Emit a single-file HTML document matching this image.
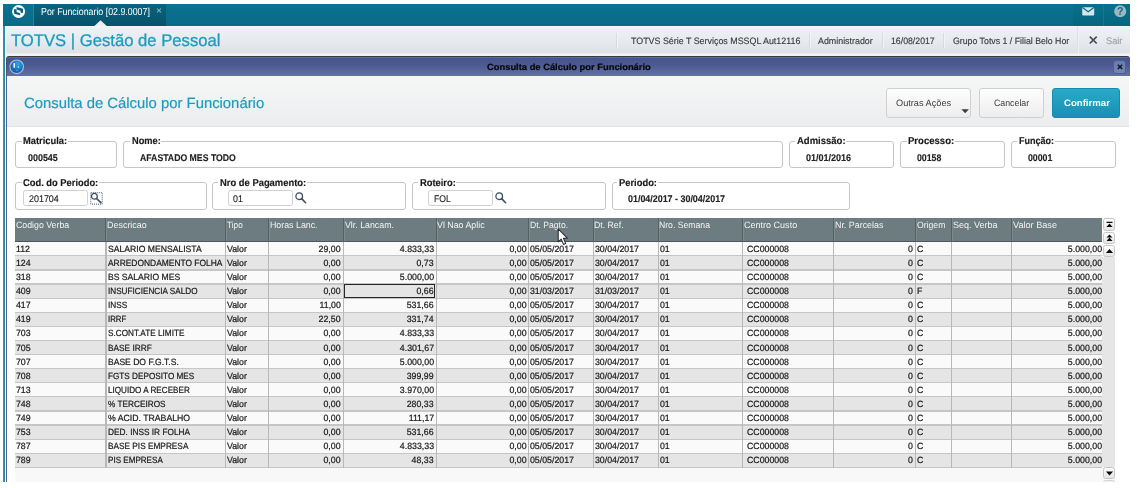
<!DOCTYPE html>
<html lang="pt-BR"><head><meta charset="utf-8"><title>TOTVS | Gestão de Pessoal</title>
<style>

html,body{margin:0;padding:0;background:#fff;}
body{width:1138px;height:488px;overflow:hidden;position:relative;
  font-family:"Liberation Sans",sans-serif;font-size:9px;color:#222;}
#app{position:absolute;left:0;top:0;width:1138px;height:488px;overflow:hidden;background:#fff;filter:blur(0.3px);}
#app div{position:absolute;box-sizing:border-box;}
.t{white-space:pre;line-height:20px;transform:rotate(0.03deg);}
.fs{border:1px solid #c6c6c6;border-radius:3px;background:#fff;}
.in{border:1px solid #cdd1d5;border-radius:2.5px;background:#fff;}

</style></head><body><div id="app">
<div style="left:3px;top:4px;width:1127px;height:21.8px;background:linear-gradient(#0b7390,#086a86);"></div>
<div style="left:33.4px;top:4px;width:133px;height:21.8px;background:linear-gradient(#09647e,#05536a);border-left:1px solid #27809a;"></div>
<svg style="position:absolute;left:10px;top:4px" width="18" height="16" viewBox="0 0 18 16"><circle cx="8.6" cy="7.5" r="6.5" fill="#fff"/><path d="M6.5 3.0 L13.0 4.8 L12.85 9.1 L10.7 8.8 L10.55 6.7 L6.7 5.4 Z" fill="#075f79"/><path d="M4.0 5.2 L6.6 5.2 L6.6 7.95 L10.1 9.15 L10.1 11.3 L4.2 9.75 Z" fill="#075f79"/></svg>
<div class="t" style="font-size:10.2px;top:2px;color:#fff;left:40.6px;transform-origin:0 0;transform:scaleX(0.8659) rotate(0.03deg);">Por Funcionario [02.9.0007]</div>
<svg style="position:absolute;left:155.6px;top:8.4px" width="6" height="5" viewBox="0 0 6 5"><path d="M0.8 0.4 L5.2 4.6 M5.2 0.4 L0.8 4.6" stroke="#b4cfd8" stroke-width="0.9" fill="none"/></svg>
<svg style="position:absolute;left:94px;top:20px" width="14" height="6" viewBox="0 0 14 6"><path d="M0.4 6 L6.5 0.2 L12.8 6 Z" fill="#eceef0"/></svg>
<div style="left:1073.4px;top:4px;width:56.6px;height:21.8px;background:linear-gradient(#08708c,#06657f);"></div>
<div style="left:1103px;top:4px;width:1px;height:21.8px;background:#2a6f84;"></div>
<svg style="position:absolute;left:1082px;top:6.8px" width="13" height="9" viewBox="0 0 13 9"><rect x="0.2" y="0.2" width="12" height="8.3" rx="0.9" fill="#d6e5ea"/><path d="M0.5 0.6 L6.2 4.8 L11.9 0.6" fill="none" stroke="#0a6d89" stroke-width="1.2"/></svg>
<svg style="position:absolute;left:1113.5px;top:5.1px" width="13" height="13" viewBox="0 0 13 13"><circle cx="6.2" cy="6.2" r="6" fill="#9fb6c0"/><text x="6.2" y="10" text-anchor="middle" font-family="Liberation Sans" font-weight="bold" font-size="10.5" fill="#0a6d89">?</text></svg>
<div style="left:6px;top:25.8px;width:1124px;height:26.8px;background:linear-gradient(#f7f8f9 0%,#eef1f4 8%,#e7eaee 55%,#dde1e5 100%);"></div>
<div style="left:6px;top:52.6px;width:1124px;height:3.6px;background:linear-gradient(#e6e8ea,#f0f1f2 40%,#f4f4f5);"></div>
<div style="left:3px;top:25.8px;width:1.6px;height:456.2px;background:linear-gradient(90deg,#3a9db3,#23849b);"></div>
<div class="t" style="font-size:16.9px;top:31px;color:#1c9cbe;left:11.2px;transform-origin:0 0;transform:scaleX(0.9858) rotate(0.03deg);-webkit-text-stroke:0.3px #1c9cbe;">TOTVS | Gestão de Pessoal</div>
<div style="left:616px;top:32.6px;width:1px;height:15px;background:#d8dbde;"></div>
<div style="left:617px;top:32.6px;width:1px;height:15px;background:#f3f4f5;"></div>
<div style="left:809.2px;top:32.6px;width:1px;height:15px;background:#d8dbde;"></div>
<div style="left:810.2px;top:32.6px;width:1px;height:15px;background:#f3f4f5;"></div>
<div style="left:881.6px;top:32.6px;width:1px;height:15px;background:#d8dbde;"></div>
<div style="left:882.6px;top:32.6px;width:1px;height:15px;background:#f3f4f5;"></div>
<div style="left:943.2px;top:32.6px;width:1px;height:15px;background:#d8dbde;"></div>
<div style="left:944.2px;top:32.6px;width:1px;height:15px;background:#f3f4f5;"></div>
<div style="left:1077.4px;top:27px;width:1px;height:25.6px;background:#dfe2e5;"></div>
<div style="left:1078.4px;top:27px;width:1px;height:25.6px;background:#eef0f2;"></div>
<div class="t" style="font-size:9.2px;top:31px;color:#3c3c3c;left:630.6px;transform-origin:0 0;transform:scaleX(0.9670) rotate(0.03deg);-webkit-text-stroke:0.15px #3c3c3c;">TOTVS Série T Serviços MSSQL Aut12116</div>
<div class="t" style="font-size:9.2px;top:31px;color:#3c3c3c;left:818.4px;transform-origin:0 0;transform:scaleX(0.9656) rotate(0.03deg);-webkit-text-stroke:0.15px #3c3c3c;">Administrador</div>
<div class="t" style="font-size:9.2px;top:31px;color:#3c3c3c;left:890.6px;transform-origin:0 0;transform:scaleX(0.9512) rotate(0.03deg);-webkit-text-stroke:0.15px #3c3c3c;">16/08/2017</div>
<div class="t" style="font-size:9.2px;top:31px;color:#3c3c3c;left:952.8px;transform-origin:0 0;transform:scaleX(0.9538) rotate(0.03deg);-webkit-text-stroke:0.15px #3c3c3c;">Grupo Totvs 1 / Filial Belo Hor</div>
<svg style="position:absolute;left:1089.4px;top:36.2px" width="9" height="9" viewBox="0 0 9 9"><path d="M0.8 0.7 L7.7 7.5 M7.7 0.7 L0.8 7.5" stroke="#474c56" stroke-width="1.7" fill="none"/></svg>
<div class="t" style="font-size:9.6px;top:31px;color:#a0a2a8;left:1105.8px;transform-origin:0 0;transform:scaleX(0.9606) rotate(0.03deg);-webkit-text-stroke:0.15px #a0a2a8;">Sair</div>
<div style="left:6px;top:56.1px;width:1124.1px;height:20.4px;background:linear-gradient(#6473a8 0%,#46558d 8%,#4a5990 40%,#5a699e 80%,#6372a6 100%);border-top:1px solid #3a3a40;border-left:1px solid #4d5166;border-radius:3px 3px 0 0;"></div>
<div class="t" style="font-size:9px;top:57px;font-weight:bold;color:#05060b;left:486.8px;transform-origin:0 0;transform:scaleX(1.0399) rotate(0.03deg);-webkit-text-stroke:0.2px #05060b;">Consulta de Cálculo por Funcionário</div>
<svg style="position:absolute;left:9px;top:59px" width="16" height="16" viewBox="0 0 16 16"><defs><radialGradient id="g1" cx="58%" cy="30%" r="75%"><stop offset="0" stop-color="#2fa6e2"/><stop offset="0.55" stop-color="#1279c8"/><stop offset="1" stop-color="#0a4c9c"/></radialGradient></defs><circle cx="7.7" cy="7.8" r="6.8" fill="url(#g1)" stroke="#b4b9c8" stroke-width="1.1"/><rect x="4.5" y="4.2" width="1.5" height="4.5" fill="#f4f9fe"/><path d="M8.3 8.6 L9.3 7.1 L10.6 8.6 Z" fill="#e3f0fb"/><rect x="7.3" y="11.3" width="1.1" height="0.8" fill="#8cc4ee"/></svg>
<div style="left:1112.6px;top:60.1px;width:13.8px;height:14px;background:linear-gradient(#6b79ad,#7583b5);border:1px solid #4f5d95;border-radius:3px;"></div>
<svg style="position:absolute;left:1116.6px;top:64.3px" width="6" height="6" viewBox="0 0 6 6"><path d="M0.8 0.8 L5.2 4.9 M5.2 0.8 L0.8 4.9" stroke="#14172a" stroke-width="1.5" fill="none"/></svg>
<div style="left:6px;top:76.2px;width:1.2px;height:405.8px;background:#4f5f98;"></div>
<div style="left:7.2px;top:76.2px;width:1122px;height:50.4px;background:linear-gradient(#f5f6f6,#ecedee);border-bottom:1px solid #e1e2e3;"></div>
<div class="t" style="font-size:14.8px;top:93px;color:#1c9cbe;left:24.4px;transform-origin:0 0;transform:scaleX(1.0033) rotate(0.03deg);-webkit-text-stroke:0.2px #1c9cbe;">Consulta de Cálculo por Funcionário</div>
<div style="left:886px;top:88.2px;width:85.4px;height:29.6px;background:linear-gradient(#fefefe,#ededed);border:1px solid #d0d0d0;border-radius:3px;"></div>
<div class="t" style="font-size:9.2px;top:93px;color:#3a3a3a;left:896px;transform-origin:0 0;">Outras Ações</div>
<svg style="position:absolute;left:961px;top:108.8px" width="9" height="5" viewBox="0 0 9 5"><path d="M0.4 0.3 L7.9 0.3 L4.15 4.3 Z" fill="#3a3a3a"/></svg>
<div style="left:979.3px;top:88.2px;width:65px;height:29.6px;background:linear-gradient(#fefefe,#ededed);border:1px solid #d0d0d0;border-radius:3px;"></div>
<div class="t" style="font-size:9.2px;top:93px;color:#3a3a3a;left:994.2px;transform-origin:0 0;transform:scaleX(0.9560) rotate(0.03deg);">Cancelar</div>
<div style="left:1052.2px;top:88.2px;width:68.2px;height:29.5px;background:linear-gradient(#2ba9c9,#1790b3);border:1px solid #178bab;border-radius:3px;"></div>
<div class="t" style="font-size:9.4px;top:93px;font-weight:bold;color:#fff;left:1063.7px;transform-origin:0 0;transform:scaleX(1.0241) rotate(0.03deg);">Confirmar</div>
<div class="fs" style="left:15px;top:141.4px;width:101.8px;height:26.4px;"></div>
<div style="left:21.6px;top:140.4px;width:46.8px;height:3px;background:#fff;"></div>
<div class="t" style="font-size:10px;top:131px;font-weight:bold;color:#1a1a1a;left:23.2px;transform-origin:0 0;transform:scaleX(0.9358) rotate(0.03deg);-webkit-text-stroke:0.15px #1a1a1a;">Matricula:</div>
<div class="t" style="font-size:9.7px;top:148px;font-weight:bold;left:28px;transform-origin:0 0;transform:scaleX(0.9207) rotate(0.03deg);-webkit-text-stroke:0.12px #222;">000545</div>
<div class="fs" style="left:123px;top:141.4px;width:659.6px;height:26.4px;"></div>
<div style="left:130px;top:140.4px;width:31.4px;height:3px;background:#fff;"></div>
<div class="t" style="font-size:10px;top:131px;font-weight:bold;color:#1a1a1a;left:131.6px;transform-origin:0 0;transform:scaleX(0.9256) rotate(0.03deg);-webkit-text-stroke:0.15px #1a1a1a;">Nome:</div>
<div class="t" style="font-size:9.7px;top:148px;font-weight:bold;left:139.6px;transform-origin:0 0;transform:scaleX(0.8982) rotate(0.03deg);-webkit-text-stroke:0.12px #222;">AFASTADO MES TODO</div>
<div class="fs" style="left:788.6px;top:141.4px;width:105.2px;height:26.4px;"></div>
<div style="left:795.2px;top:140.4px;width:51.2px;height:3px;background:#fff;"></div>
<div class="t" style="font-size:10px;top:131px;font-weight:bold;color:#1a1a1a;left:796.8px;transform-origin:0 0;transform:scaleX(0.9506) rotate(0.03deg);-webkit-text-stroke:0.15px #1a1a1a;">Admissão:</div>
<div class="t" style="font-size:9.7px;top:148px;font-weight:bold;left:806px;transform-origin:0 0;transform:scaleX(0.9310) rotate(0.03deg);-webkit-text-stroke:0.12px #222;">01/01/2016</div>
<div class="fs" style="left:899.9px;top:141.4px;width:104.7px;height:26.4px;"></div>
<div style="left:906.6px;top:140.4px;width:48.8px;height:3px;background:#fff;"></div>
<div class="t" style="font-size:10px;top:131px;font-weight:bold;color:#1a1a1a;left:908.2px;transform-origin:0 0;transform:scaleX(0.9554) rotate(0.03deg);-webkit-text-stroke:0.15px #1a1a1a;">Processo:</div>
<div class="t" style="font-size:9.7px;top:148px;font-weight:bold;left:917px;transform-origin:0 0;transform:scaleX(0.9046) rotate(0.03deg);-webkit-text-stroke:0.12px #222;">00158</div>
<div class="fs" style="left:1011.1px;top:141.4px;width:105px;height:26.4px;"></div>
<div style="left:1017.3px;top:140.4px;width:37.6px;height:3px;background:#fff;"></div>
<div class="t" style="font-size:10px;top:131px;font-weight:bold;color:#1a1a1a;left:1018.9px;transform-origin:0 0;transform:scaleX(0.9000) rotate(0.03deg);-webkit-text-stroke:0.15px #1a1a1a;">Função:</div>
<div class="t" style="font-size:9.7px;top:148px;font-weight:bold;left:1027.9px;transform-origin:0 0;transform:scaleX(0.9046) rotate(0.03deg);-webkit-text-stroke:0.12px #222;">00001</div>
<div class="fs" style="left:15px;top:182.2px;width:191.7px;height:27.6px;"></div>
<div style="left:21.6px;top:181.2px;width:77.8px;height:3px;background:#fff;"></div>
<div class="t" style="font-size:10px;top:173px;font-weight:bold;color:#1a1a1a;left:23.2px;transform-origin:0 0;transform:scaleX(0.9336) rotate(0.03deg);-webkit-text-stroke:0.15px #1a1a1a;">Cod. do Periodo:</div>
<div class="in" style="left:23.2px;top:190px;width:64.8px;height:15.9px;"></div>
<div class="t" style="font-size:9.7px;top:189px;left:28.7px;transform-origin:0 0;transform:scaleX(0.9207) rotate(0.03deg);-webkit-text-stroke:0.12px #222;">201704</div>
<div class="fs" style="left:211.5px;top:182.2px;width:194.5px;height:27.6px;"></div>
<div style="left:218px;top:181.2px;width:88.8px;height:3px;background:#fff;"></div>
<div class="t" style="font-size:10px;top:173px;font-weight:bold;color:#1a1a1a;left:219.6px;transform-origin:0 0;transform:scaleX(0.9402) rotate(0.03deg);-webkit-text-stroke:0.15px #1a1a1a;">Nro de Pagamento:</div>
<div class="in" style="left:228.2px;top:190px;width:64.4px;height:15.9px;"></div>
<div class="t" style="font-size:9.7px;top:189px;left:232.8px;transform-origin:0 0;transform:scaleX(0.9083) rotate(0.03deg);-webkit-text-stroke:0.12px #222;">01</div>
<div class="fs" style="left:411.9px;top:182.2px;width:194.1px;height:27.6px;"></div>
<div style="left:418.1px;top:181.2px;width:38.4px;height:3px;background:#fff;"></div>
<div class="t" style="font-size:10px;top:173px;font-weight:bold;color:#1a1a1a;left:419.7px;transform-origin:0 0;transform:scaleX(0.9340) rotate(0.03deg);-webkit-text-stroke:0.15px #1a1a1a;">Roteiro:</div>
<div class="in" style="left:428.2px;top:190px;width:64.4px;height:15.9px;"></div>
<div class="t" style="font-size:9.7px;top:189px;left:433.6px;transform-origin:0 0;transform:scaleX(0.8905) rotate(0.03deg);-webkit-text-stroke:0.12px #222;">FOL</div>
<div class="fs" style="left:611.5px;top:182.2px;width:238.4px;height:27.6px;"></div>
<div style="left:617.4px;top:181.2px;width:40.6px;height:3px;background:#fff;"></div>
<div class="t" style="font-size:10px;top:173px;font-weight:bold;color:#1a1a1a;left:619px;transform-origin:0 0;transform:scaleX(0.9370) rotate(0.03deg);-webkit-text-stroke:0.15px #1a1a1a;">Periodo:</div>
<div class="t" style="font-size:9.7px;top:189px;font-weight:bold;left:628px;transform-origin:0 0;transform:scaleX(0.9195) rotate(0.03deg);-webkit-text-stroke:0.12px #222;">01/04/2017 - 30/04/2017</div>
<svg style="position:absolute;left:90px;top:191.6px" width="13" height="13" viewBox="0 0 13 13"><rect x="0.8" y="0.7" width="11.4" height="11.4" fill="none" stroke="#39465a" stroke-width="0.9" stroke-dasharray="1 1"/><circle cx="4.4" cy="4.3" r="2.9" fill="#fff" stroke="#3d4e64" stroke-width="1.3"/><path d="M6.6 6.5 L11.4 11.2" stroke="#3d4e64" stroke-width="1.7"/></svg>
<svg style="position:absolute;left:295px;top:191.6px" width="12" height="12" viewBox="0 0 12 12"><circle cx="4.2" cy="4.2" r="3.3" fill="none" stroke="#3c4c60" stroke-width="1.3"/><path d="M6.6 6.6 L10.6 10.7" stroke="#3c4c60" stroke-width="1.6" stroke-linecap="round"/></svg>
<svg style="position:absolute;left:495px;top:191.6px" width="12" height="12" viewBox="0 0 12 12"><circle cx="4.2" cy="4.2" r="3.3" fill="none" stroke="#3c4c60" stroke-width="1.3"/><path d="M6.6 6.6 L10.6 10.7" stroke="#3c4c60" stroke-width="1.6" stroke-linecap="round"/></svg>
<div style="left:15.4px;top:218px;width:1099.8px;height:264px;background:#f8f8f8;"></div>
<div style="left:1102.3px;top:218px;width:12.9px;height:40px;background:#fff;"></div>
<div style="left:1102.3px;top:257.2px;width:13.1px;height:209.4px;background:#e6e6e6;"></div>
<div style="left:15.4px;top:218px;width:1086.9px;height:23.7px;background:#6c7c81;border-bottom:1px solid #4e585c;"></div>
<div class="t" style="font-size:9.1px;top:215px;color:#f2f5f5;left:16.4px;transform-origin:0 0;transform:scaleX(0.9647) rotate(0.03deg);">Codigo Verba</div>
<div style="left:105.2px;top:218px;width:1.1px;height:23.7px;background:#566166;"></div>
<div style="left:106.3px;top:218px;width:0.8px;height:22.7px;background:#7b8a8f;"></div>
<div class="t" style="font-size:9.1px;top:215px;color:#f2f5f5;left:107.4px;transform-origin:0 0;transform:scaleX(0.9838) rotate(0.03deg);">Descricao</div>
<div style="left:225px;top:218px;width:1.1px;height:23.7px;background:#566166;"></div>
<div style="left:226.1px;top:218px;width:0.8px;height:22.7px;background:#7b8a8f;"></div>
<div class="t" style="font-size:9.1px;top:215px;color:#f2f5f5;left:227px;transform-origin:0 0;transform:scaleX(0.9099) rotate(0.03deg);">Tipo</div>
<div style="left:268px;top:218px;width:1.1px;height:23.7px;background:#566166;"></div>
<div style="left:269.1px;top:218px;width:0.8px;height:22.7px;background:#7b8a8f;"></div>
<div class="t" style="font-size:9.1px;top:215px;color:#f2f5f5;left:269.8px;transform-origin:0 0;transform:scaleX(0.9702) rotate(0.03deg);">Horas Lanc.</div>
<div style="left:343.1px;top:218px;width:1.1px;height:23.7px;background:#566166;"></div>
<div style="left:344.2px;top:218px;width:0.8px;height:22.7px;background:#7b8a8f;"></div>
<div class="t" style="font-size:9.1px;top:215px;color:#f2f5f5;left:344.5px;transform-origin:0 0;transform:scaleX(0.9688) rotate(0.03deg);">Vlr. Lancam.</div>
<div style="left:435.5px;top:218px;width:1.1px;height:23.7px;background:#566166;"></div>
<div style="left:436.6px;top:218px;width:0.8px;height:22.7px;background:#7b8a8f;"></div>
<div class="t" style="font-size:9.1px;top:215px;color:#f2f5f5;left:436.8px;transform-origin:0 0;transform:scaleX(0.9702) rotate(0.03deg);">Vl Nao Aplic</div>
<div style="left:528px;top:218px;width:1.1px;height:23.7px;background:#566166;"></div>
<div style="left:529.1px;top:218px;width:0.8px;height:22.7px;background:#7b8a8f;"></div>
<div class="t" style="font-size:9.1px;top:215px;color:#f2f5f5;left:530.2px;transform-origin:0 0;transform:scaleX(0.9440) rotate(0.03deg);">Dt. Pagto.</div>
<div style="left:592.8px;top:218px;width:1.1px;height:23.7px;background:#566166;"></div>
<div style="left:593.9px;top:218px;width:0.8px;height:22.7px;background:#7b8a8f;"></div>
<div class="t" style="font-size:9.1px;top:215px;color:#f2f5f5;left:594.4px;transform-origin:0 0;transform:scaleX(0.9596) rotate(0.03deg);">Dt. Ref.</div>
<div style="left:657.6px;top:218px;width:1.1px;height:23.7px;background:#566166;"></div>
<div style="left:658.7px;top:218px;width:0.8px;height:22.7px;background:#7b8a8f;"></div>
<div class="t" style="font-size:9.1px;top:215px;color:#f2f5f5;left:659.2px;transform-origin:0 0;transform:scaleX(0.9512) rotate(0.03deg);">Nro. Semana</div>
<div style="left:742px;top:218px;width:1.1px;height:23.7px;background:#566166;"></div>
<div style="left:743.1px;top:218px;width:0.8px;height:22.7px;background:#7b8a8f;"></div>
<div class="t" style="font-size:9.1px;top:215px;color:#f2f5f5;left:744.3px;transform-origin:0 0;transform:scaleX(0.9923) rotate(0.03deg);">Centro Custo</div>
<div style="left:833.1px;top:218px;width:1.1px;height:23.7px;background:#566166;"></div>
<div style="left:834.2px;top:218px;width:0.8px;height:22.7px;background:#7b8a8f;"></div>
<div class="t" style="font-size:9.1px;top:215px;color:#f2f5f5;left:834.8px;transform-origin:0 0;transform:scaleX(0.9766) rotate(0.03deg);">Nr. Parcelas</div>
<div style="left:914.8px;top:218px;width:1.1px;height:23.7px;background:#566166;"></div>
<div style="left:915.9px;top:218px;width:0.8px;height:22.7px;background:#7b8a8f;"></div>
<div class="t" style="font-size:9.1px;top:215px;color:#f2f5f5;left:916.8px;transform-origin:0 0;transform:scaleX(0.9520) rotate(0.03deg);">Origem</div>
<div style="left:951.1px;top:218px;width:1.1px;height:23.7px;background:#566166;"></div>
<div style="left:952.2px;top:218px;width:0.8px;height:22.7px;background:#7b8a8f;"></div>
<div class="t" style="font-size:9.1px;top:215px;color:#f2f5f5;left:953px;transform-origin:0 0;transform:scaleX(0.9905) rotate(0.03deg);">Seq. Verba</div>
<div style="left:1011px;top:218px;width:1.1px;height:23.7px;background:#566166;"></div>
<div style="left:1012.1px;top:218px;width:0.8px;height:22.7px;background:#7b8a8f;"></div>
<div class="t" style="font-size:9.1px;top:215px;color:#f2f5f5;left:1012.6px;transform-origin:0 0;transform:scaleX(1.0037) rotate(0.03deg);">Valor Base</div>
<div style="left:15.4px;top:241.7px;width:1086.9px;height:14.7px;background:#fafafa;"></div>
<div style="left:15.4px;top:255.2px;width:1086.9px;height:1.3px;background:#c6c6c6;"></div>
<div class="t" style="font-size:9px;top:239px;color:#1a1a1a;left:16.3px;transform-origin:0 0;transform:scaleX(0.9750) rotate(0.03deg);-webkit-text-stroke:0.2px #141414;">112</div>
<div class="t" style="font-size:9px;top:239px;color:#1a1a1a;left:107.5px;transform-origin:0 0;transform:scaleX(0.9575) rotate(0.03deg);-webkit-text-stroke:0.2px #141414;">SALARIO MENSALISTA</div>
<div class="t" style="font-size:9px;top:239px;color:#1a1a1a;left:227.2px;transform-origin:0 0;transform:scaleX(0.9750) rotate(0.03deg);-webkit-text-stroke:0.2px #141414;">Valor</div>
<div class="t" style="font-size:9px;top:239px;color:#1a1a1a;right:797.5px;transform-origin:100% 0;transform:scaleX(0.9750) rotate(0.03deg);-webkit-text-stroke:0.2px #141414;">29,00</div>
<div class="t" style="font-size:9px;top:239px;color:#1a1a1a;right:704.1px;transform-origin:100% 0;transform:scaleX(0.9750) rotate(0.03deg);-webkit-text-stroke:0.2px #141414;">4.833,33</div>
<div class="t" style="font-size:9px;top:239px;color:#1a1a1a;right:611.6px;transform-origin:100% 0;transform:scaleX(0.9750) rotate(0.03deg);-webkit-text-stroke:0.2px #141414;">0,00</div>
<div class="t" style="font-size:9px;top:239px;color:#1a1a1a;left:530.2px;transform-origin:0 0;transform:scaleX(0.9750) rotate(0.03deg);-webkit-text-stroke:0.2px #141414;">05/05/2017</div>
<div class="t" style="font-size:9px;top:239px;color:#1a1a1a;left:595px;transform-origin:0 0;transform:scaleX(0.9750) rotate(0.03deg);-webkit-text-stroke:0.2px #141414;">30/04/2017</div>
<div class="t" style="font-size:9px;top:239px;color:#1a1a1a;left:659.8px;transform-origin:0 0;transform:scaleX(0.9750) rotate(0.03deg);-webkit-text-stroke:0.2px #141414;">01</div>
<div class="t" style="font-size:9px;top:239px;color:#1a1a1a;left:746.6px;transform-origin:0 0;transform:scaleX(0.9750) rotate(0.03deg);-webkit-text-stroke:0.2px #141414;">CC000008</div>
<div class="t" style="font-size:9px;top:239px;color:#1a1a1a;right:224.6px;transform-origin:100% 0;transform:scaleX(0.9750) rotate(0.03deg);-webkit-text-stroke:0.2px #141414;">0</div>
<div class="t" style="font-size:9px;top:239px;color:#1a1a1a;left:917px;transform-origin:0 0;transform:scaleX(0.9750) rotate(0.03deg);-webkit-text-stroke:0.2px #141414;">C</div>
<div class="t" style="font-size:9px;top:239px;color:#1a1a1a;right:35.9px;transform-origin:100% 0;transform:scaleX(0.9750) rotate(0.03deg);-webkit-text-stroke:0.2px #141414;">5.000,00</div>
<div style="left:15.4px;top:256.4px;width:1086.9px;height:14.1px;background:#e5e5e5;"></div>
<div style="left:15.4px;top:269.3px;width:1086.9px;height:1.3px;background:#c6c6c6;"></div>
<div class="t" style="font-size:9px;top:253px;color:#1a1a1a;left:16.3px;transform-origin:0 0;transform:scaleX(0.9750) rotate(0.03deg);-webkit-text-stroke:0.2px #141414;">124</div>
<div class="t" style="font-size:9px;top:253px;color:#1a1a1a;left:107.5px;transform-origin:0 0;transform:scaleX(0.9350) rotate(0.03deg);-webkit-text-stroke:0.2px #141414;">ARREDONDAMENTO FOLHA</div>
<div class="t" style="font-size:9px;top:253px;color:#1a1a1a;left:227.2px;transform-origin:0 0;transform:scaleX(0.9750) rotate(0.03deg);-webkit-text-stroke:0.2px #141414;">Valor</div>
<div class="t" style="font-size:9px;top:253px;color:#1a1a1a;right:797.5px;transform-origin:100% 0;transform:scaleX(0.9750) rotate(0.03deg);-webkit-text-stroke:0.2px #141414;">0,00</div>
<div class="t" style="font-size:9px;top:253px;color:#1a1a1a;right:704.1px;transform-origin:100% 0;transform:scaleX(0.9750) rotate(0.03deg);-webkit-text-stroke:0.2px #141414;">0,73</div>
<div class="t" style="font-size:9px;top:253px;color:#1a1a1a;right:611.6px;transform-origin:100% 0;transform:scaleX(0.9750) rotate(0.03deg);-webkit-text-stroke:0.2px #141414;">0,00</div>
<div class="t" style="font-size:9px;top:253px;color:#1a1a1a;left:530.2px;transform-origin:0 0;transform:scaleX(0.9750) rotate(0.03deg);-webkit-text-stroke:0.2px #141414;">05/05/2017</div>
<div class="t" style="font-size:9px;top:253px;color:#1a1a1a;left:595px;transform-origin:0 0;transform:scaleX(0.9750) rotate(0.03deg);-webkit-text-stroke:0.2px #141414;">30/04/2017</div>
<div class="t" style="font-size:9px;top:253px;color:#1a1a1a;left:659.8px;transform-origin:0 0;transform:scaleX(0.9750) rotate(0.03deg);-webkit-text-stroke:0.2px #141414;">01</div>
<div class="t" style="font-size:9px;top:253px;color:#1a1a1a;left:746.6px;transform-origin:0 0;transform:scaleX(0.9750) rotate(0.03deg);-webkit-text-stroke:0.2px #141414;">CC000008</div>
<div class="t" style="font-size:9px;top:253px;color:#1a1a1a;right:224.6px;transform-origin:100% 0;transform:scaleX(0.9750) rotate(0.03deg);-webkit-text-stroke:0.2px #141414;">0</div>
<div class="t" style="font-size:9px;top:253px;color:#1a1a1a;left:917px;transform-origin:0 0;transform:scaleX(0.9750) rotate(0.03deg);-webkit-text-stroke:0.2px #141414;">C</div>
<div class="t" style="font-size:9px;top:253px;color:#1a1a1a;right:35.9px;transform-origin:100% 0;transform:scaleX(0.9750) rotate(0.03deg);-webkit-text-stroke:0.2px #141414;">5.000,00</div>
<div style="left:15.4px;top:270.5px;width:1086.9px;height:14.1px;background:#fafafa;"></div>
<div style="left:15.4px;top:283.4px;width:1086.9px;height:1.3px;background:#c6c6c6;"></div>
<div class="t" style="font-size:9px;top:267px;color:#1a1a1a;left:16.3px;transform-origin:0 0;transform:scaleX(0.9750) rotate(0.03deg);-webkit-text-stroke:0.2px #141414;">318</div>
<div class="t" style="font-size:9px;top:267px;color:#1a1a1a;left:107.5px;transform-origin:0 0;transform:scaleX(0.9560) rotate(0.03deg);-webkit-text-stroke:0.2px #141414;">BS SALARIO MES</div>
<div class="t" style="font-size:9px;top:267px;color:#1a1a1a;left:227.2px;transform-origin:0 0;transform:scaleX(0.9750) rotate(0.03deg);-webkit-text-stroke:0.2px #141414;">Valor</div>
<div class="t" style="font-size:9px;top:267px;color:#1a1a1a;right:797.5px;transform-origin:100% 0;transform:scaleX(0.9750) rotate(0.03deg);-webkit-text-stroke:0.2px #141414;">0,00</div>
<div class="t" style="font-size:9px;top:267px;color:#1a1a1a;right:704.1px;transform-origin:100% 0;transform:scaleX(0.9750) rotate(0.03deg);-webkit-text-stroke:0.2px #141414;">5.000,00</div>
<div class="t" style="font-size:9px;top:267px;color:#1a1a1a;right:611.6px;transform-origin:100% 0;transform:scaleX(0.9750) rotate(0.03deg);-webkit-text-stroke:0.2px #141414;">0,00</div>
<div class="t" style="font-size:9px;top:267px;color:#1a1a1a;left:530.2px;transform-origin:0 0;transform:scaleX(0.9750) rotate(0.03deg);-webkit-text-stroke:0.2px #141414;">05/05/2017</div>
<div class="t" style="font-size:9px;top:267px;color:#1a1a1a;left:595px;transform-origin:0 0;transform:scaleX(0.9750) rotate(0.03deg);-webkit-text-stroke:0.2px #141414;">30/04/2017</div>
<div class="t" style="font-size:9px;top:267px;color:#1a1a1a;left:659.8px;transform-origin:0 0;transform:scaleX(0.9750) rotate(0.03deg);-webkit-text-stroke:0.2px #141414;">01</div>
<div class="t" style="font-size:9px;top:267px;color:#1a1a1a;left:746.6px;transform-origin:0 0;transform:scaleX(0.9750) rotate(0.03deg);-webkit-text-stroke:0.2px #141414;">CC000008</div>
<div class="t" style="font-size:9px;top:267px;color:#1a1a1a;right:224.6px;transform-origin:100% 0;transform:scaleX(0.9750) rotate(0.03deg);-webkit-text-stroke:0.2px #141414;">0</div>
<div class="t" style="font-size:9px;top:267px;color:#1a1a1a;left:917px;transform-origin:0 0;transform:scaleX(0.9750) rotate(0.03deg);-webkit-text-stroke:0.2px #141414;">C</div>
<div class="t" style="font-size:9px;top:267px;color:#1a1a1a;right:35.9px;transform-origin:100% 0;transform:scaleX(0.9750) rotate(0.03deg);-webkit-text-stroke:0.2px #141414;">5.000,00</div>
<div style="left:15.4px;top:284.6px;width:1086.9px;height:14.1px;background:#e5e5e5;"></div>
<div style="left:15.4px;top:297.5px;width:1086.9px;height:1.3px;background:#c6c6c6;"></div>
<div class="t" style="font-size:9px;top:281px;color:#1a1a1a;left:16.3px;transform-origin:0 0;transform:scaleX(0.9750) rotate(0.03deg);-webkit-text-stroke:0.2px #141414;">409</div>
<div class="t" style="font-size:9px;top:281px;color:#1a1a1a;left:107.5px;transform-origin:0 0;transform:scaleX(0.9084) rotate(0.03deg);-webkit-text-stroke:0.2px #141414;">INSUFICIENCIA SALDO</div>
<div class="t" style="font-size:9px;top:281px;color:#1a1a1a;left:227.2px;transform-origin:0 0;transform:scaleX(0.9750) rotate(0.03deg);-webkit-text-stroke:0.2px #141414;">Valor</div>
<div class="t" style="font-size:9px;top:281px;color:#1a1a1a;right:797.5px;transform-origin:100% 0;transform:scaleX(0.9750) rotate(0.03deg);-webkit-text-stroke:0.2px #141414;">0,00</div>
<div class="t" style="font-size:9px;top:281px;color:#1a1a1a;right:704.1px;transform-origin:100% 0;transform:scaleX(0.9750) rotate(0.03deg);-webkit-text-stroke:0.2px #141414;">0,66</div>
<div class="t" style="font-size:9px;top:281px;color:#1a1a1a;right:611.6px;transform-origin:100% 0;transform:scaleX(0.9750) rotate(0.03deg);-webkit-text-stroke:0.2px #141414;">0,00</div>
<div class="t" style="font-size:9px;top:281px;color:#1a1a1a;left:530.2px;transform-origin:0 0;transform:scaleX(0.9750) rotate(0.03deg);-webkit-text-stroke:0.2px #141414;">31/03/2017</div>
<div class="t" style="font-size:9px;top:281px;color:#1a1a1a;left:595px;transform-origin:0 0;transform:scaleX(0.9750) rotate(0.03deg);-webkit-text-stroke:0.2px #141414;">31/03/2017</div>
<div class="t" style="font-size:9px;top:281px;color:#1a1a1a;left:659.8px;transform-origin:0 0;transform:scaleX(0.9750) rotate(0.03deg);-webkit-text-stroke:0.2px #141414;">01</div>
<div class="t" style="font-size:9px;top:281px;color:#1a1a1a;left:746.6px;transform-origin:0 0;transform:scaleX(0.9750) rotate(0.03deg);-webkit-text-stroke:0.2px #141414;">CC000008</div>
<div class="t" style="font-size:9px;top:281px;color:#1a1a1a;right:224.6px;transform-origin:100% 0;transform:scaleX(0.9750) rotate(0.03deg);-webkit-text-stroke:0.2px #141414;">0</div>
<div class="t" style="font-size:9px;top:281px;color:#1a1a1a;left:917px;transform-origin:0 0;transform:scaleX(0.9750) rotate(0.03deg);-webkit-text-stroke:0.2px #141414;">F</div>
<div class="t" style="font-size:9px;top:281px;color:#1a1a1a;right:35.9px;transform-origin:100% 0;transform:scaleX(0.9750) rotate(0.03deg);-webkit-text-stroke:0.2px #141414;">5.000,00</div>
<div style="left:15.4px;top:298.7px;width:1086.9px;height:14.1px;background:#fafafa;"></div>
<div style="left:15.4px;top:311.6px;width:1086.9px;height:1.3px;background:#c6c6c6;"></div>
<div class="t" style="font-size:9px;top:295px;color:#1a1a1a;left:16.3px;transform-origin:0 0;transform:scaleX(0.9750) rotate(0.03deg);-webkit-text-stroke:0.2px #141414;">417</div>
<div class="t" style="font-size:9px;top:295px;color:#1a1a1a;left:107.5px;transform-origin:0 0;transform:scaleX(0.9140) rotate(0.03deg);-webkit-text-stroke:0.2px #141414;">INSS</div>
<div class="t" style="font-size:9px;top:295px;color:#1a1a1a;left:227.2px;transform-origin:0 0;transform:scaleX(0.9750) rotate(0.03deg);-webkit-text-stroke:0.2px #141414;">Valor</div>
<div class="t" style="font-size:9px;top:295px;color:#1a1a1a;right:797.5px;transform-origin:100% 0;transform:scaleX(0.9750) rotate(0.03deg);-webkit-text-stroke:0.2px #141414;">11,00</div>
<div class="t" style="font-size:9px;top:295px;color:#1a1a1a;right:704.1px;transform-origin:100% 0;transform:scaleX(0.9750) rotate(0.03deg);-webkit-text-stroke:0.2px #141414;">531,66</div>
<div class="t" style="font-size:9px;top:295px;color:#1a1a1a;right:611.6px;transform-origin:100% 0;transform:scaleX(0.9750) rotate(0.03deg);-webkit-text-stroke:0.2px #141414;">0,00</div>
<div class="t" style="font-size:9px;top:295px;color:#1a1a1a;left:530.2px;transform-origin:0 0;transform:scaleX(0.9750) rotate(0.03deg);-webkit-text-stroke:0.2px #141414;">05/05/2017</div>
<div class="t" style="font-size:9px;top:295px;color:#1a1a1a;left:595px;transform-origin:0 0;transform:scaleX(0.9750) rotate(0.03deg);-webkit-text-stroke:0.2px #141414;">30/04/2017</div>
<div class="t" style="font-size:9px;top:295px;color:#1a1a1a;left:659.8px;transform-origin:0 0;transform:scaleX(0.9750) rotate(0.03deg);-webkit-text-stroke:0.2px #141414;">01</div>
<div class="t" style="font-size:9px;top:295px;color:#1a1a1a;left:746.6px;transform-origin:0 0;transform:scaleX(0.9750) rotate(0.03deg);-webkit-text-stroke:0.2px #141414;">CC000008</div>
<div class="t" style="font-size:9px;top:295px;color:#1a1a1a;right:224.6px;transform-origin:100% 0;transform:scaleX(0.9750) rotate(0.03deg);-webkit-text-stroke:0.2px #141414;">0</div>
<div class="t" style="font-size:9px;top:295px;color:#1a1a1a;left:917px;transform-origin:0 0;transform:scaleX(0.9750) rotate(0.03deg);-webkit-text-stroke:0.2px #141414;">C</div>
<div class="t" style="font-size:9px;top:295px;color:#1a1a1a;right:35.9px;transform-origin:100% 0;transform:scaleX(0.9750) rotate(0.03deg);-webkit-text-stroke:0.2px #141414;">5.000,00</div>
<div style="left:15.4px;top:312.8px;width:1086.9px;height:14.1px;background:#e5e5e5;"></div>
<div style="left:15.4px;top:325.7px;width:1086.9px;height:1.3px;background:#c6c6c6;"></div>
<div class="t" style="font-size:9px;top:309px;color:#1a1a1a;left:16.3px;transform-origin:0 0;transform:scaleX(0.9750) rotate(0.03deg);-webkit-text-stroke:0.2px #141414;">419</div>
<div class="t" style="font-size:9px;top:309px;color:#1a1a1a;left:107.5px;transform-origin:0 0;transform:scaleX(0.8668) rotate(0.03deg);-webkit-text-stroke:0.2px #141414;">IRRF</div>
<div class="t" style="font-size:9px;top:309px;color:#1a1a1a;left:227.2px;transform-origin:0 0;transform:scaleX(0.9750) rotate(0.03deg);-webkit-text-stroke:0.2px #141414;">Valor</div>
<div class="t" style="font-size:9px;top:309px;color:#1a1a1a;right:797.5px;transform-origin:100% 0;transform:scaleX(0.9750) rotate(0.03deg);-webkit-text-stroke:0.2px #141414;">22,50</div>
<div class="t" style="font-size:9px;top:309px;color:#1a1a1a;right:704.1px;transform-origin:100% 0;transform:scaleX(0.9750) rotate(0.03deg);-webkit-text-stroke:0.2px #141414;">331,74</div>
<div class="t" style="font-size:9px;top:309px;color:#1a1a1a;right:611.6px;transform-origin:100% 0;transform:scaleX(0.9750) rotate(0.03deg);-webkit-text-stroke:0.2px #141414;">0,00</div>
<div class="t" style="font-size:9px;top:309px;color:#1a1a1a;left:530.2px;transform-origin:0 0;transform:scaleX(0.9750) rotate(0.03deg);-webkit-text-stroke:0.2px #141414;">05/05/2017</div>
<div class="t" style="font-size:9px;top:309px;color:#1a1a1a;left:595px;transform-origin:0 0;transform:scaleX(0.9750) rotate(0.03deg);-webkit-text-stroke:0.2px #141414;">30/04/2017</div>
<div class="t" style="font-size:9px;top:309px;color:#1a1a1a;left:659.8px;transform-origin:0 0;transform:scaleX(0.9750) rotate(0.03deg);-webkit-text-stroke:0.2px #141414;">01</div>
<div class="t" style="font-size:9px;top:309px;color:#1a1a1a;left:746.6px;transform-origin:0 0;transform:scaleX(0.9750) rotate(0.03deg);-webkit-text-stroke:0.2px #141414;">CC000008</div>
<div class="t" style="font-size:9px;top:309px;color:#1a1a1a;right:224.6px;transform-origin:100% 0;transform:scaleX(0.9750) rotate(0.03deg);-webkit-text-stroke:0.2px #141414;">0</div>
<div class="t" style="font-size:9px;top:309px;color:#1a1a1a;left:917px;transform-origin:0 0;transform:scaleX(0.9750) rotate(0.03deg);-webkit-text-stroke:0.2px #141414;">C</div>
<div class="t" style="font-size:9px;top:309px;color:#1a1a1a;right:35.9px;transform-origin:100% 0;transform:scaleX(0.9750) rotate(0.03deg);-webkit-text-stroke:0.2px #141414;">5.000,00</div>
<div style="left:15.4px;top:326.9px;width:1086.9px;height:14.1px;background:#fafafa;"></div>
<div style="left:15.4px;top:339.8px;width:1086.9px;height:1.3px;background:#c6c6c6;"></div>
<div class="t" style="font-size:9px;top:323px;color:#1a1a1a;left:16.3px;transform-origin:0 0;transform:scaleX(0.9750) rotate(0.03deg);-webkit-text-stroke:0.2px #141414;">703</div>
<div class="t" style="font-size:9px;top:323px;color:#1a1a1a;left:107.5px;transform-origin:0 0;transform:scaleX(0.9112) rotate(0.03deg);-webkit-text-stroke:0.2px #141414;">S.CONT.ATE LIMITE</div>
<div class="t" style="font-size:9px;top:323px;color:#1a1a1a;left:227.2px;transform-origin:0 0;transform:scaleX(0.9750) rotate(0.03deg);-webkit-text-stroke:0.2px #141414;">Valor</div>
<div class="t" style="font-size:9px;top:323px;color:#1a1a1a;right:797.5px;transform-origin:100% 0;transform:scaleX(0.9750) rotate(0.03deg);-webkit-text-stroke:0.2px #141414;">0,00</div>
<div class="t" style="font-size:9px;top:323px;color:#1a1a1a;right:704.1px;transform-origin:100% 0;transform:scaleX(0.9750) rotate(0.03deg);-webkit-text-stroke:0.2px #141414;">4.833,33</div>
<div class="t" style="font-size:9px;top:323px;color:#1a1a1a;right:611.6px;transform-origin:100% 0;transform:scaleX(0.9750) rotate(0.03deg);-webkit-text-stroke:0.2px #141414;">0,00</div>
<div class="t" style="font-size:9px;top:323px;color:#1a1a1a;left:530.2px;transform-origin:0 0;transform:scaleX(0.9750) rotate(0.03deg);-webkit-text-stroke:0.2px #141414;">05/05/2017</div>
<div class="t" style="font-size:9px;top:323px;color:#1a1a1a;left:595px;transform-origin:0 0;transform:scaleX(0.9750) rotate(0.03deg);-webkit-text-stroke:0.2px #141414;">30/04/2017</div>
<div class="t" style="font-size:9px;top:323px;color:#1a1a1a;left:659.8px;transform-origin:0 0;transform:scaleX(0.9750) rotate(0.03deg);-webkit-text-stroke:0.2px #141414;">01</div>
<div class="t" style="font-size:9px;top:323px;color:#1a1a1a;left:746.6px;transform-origin:0 0;transform:scaleX(0.9750) rotate(0.03deg);-webkit-text-stroke:0.2px #141414;">CC000008</div>
<div class="t" style="font-size:9px;top:323px;color:#1a1a1a;right:224.6px;transform-origin:100% 0;transform:scaleX(0.9750) rotate(0.03deg);-webkit-text-stroke:0.2px #141414;">0</div>
<div class="t" style="font-size:9px;top:323px;color:#1a1a1a;left:917px;transform-origin:0 0;transform:scaleX(0.9750) rotate(0.03deg);-webkit-text-stroke:0.2px #141414;">C</div>
<div class="t" style="font-size:9px;top:323px;color:#1a1a1a;right:35.9px;transform-origin:100% 0;transform:scaleX(0.9750) rotate(0.03deg);-webkit-text-stroke:0.2px #141414;">5.000,00</div>
<div style="left:15.4px;top:341px;width:1086.9px;height:14.1px;background:#e5e5e5;"></div>
<div style="left:15.4px;top:353.9px;width:1086.9px;height:1.3px;background:#c6c6c6;"></div>
<div class="t" style="font-size:9px;top:338px;color:#1a1a1a;left:16.3px;transform-origin:0 0;transform:scaleX(0.9750) rotate(0.03deg);-webkit-text-stroke:0.2px #141414;">705</div>
<div class="t" style="font-size:9px;top:338px;color:#1a1a1a;left:107.5px;transform-origin:0 0;transform:scaleX(0.9219) rotate(0.03deg);-webkit-text-stroke:0.2px #141414;">BASE IRRF</div>
<div class="t" style="font-size:9px;top:338px;color:#1a1a1a;left:227.2px;transform-origin:0 0;transform:scaleX(0.9750) rotate(0.03deg);-webkit-text-stroke:0.2px #141414;">Valor</div>
<div class="t" style="font-size:9px;top:338px;color:#1a1a1a;right:797.5px;transform-origin:100% 0;transform:scaleX(0.9750) rotate(0.03deg);-webkit-text-stroke:0.2px #141414;">0,00</div>
<div class="t" style="font-size:9px;top:338px;color:#1a1a1a;right:704.1px;transform-origin:100% 0;transform:scaleX(0.9750) rotate(0.03deg);-webkit-text-stroke:0.2px #141414;">4.301,67</div>
<div class="t" style="font-size:9px;top:338px;color:#1a1a1a;right:611.6px;transform-origin:100% 0;transform:scaleX(0.9750) rotate(0.03deg);-webkit-text-stroke:0.2px #141414;">0,00</div>
<div class="t" style="font-size:9px;top:338px;color:#1a1a1a;left:530.2px;transform-origin:0 0;transform:scaleX(0.9750) rotate(0.03deg);-webkit-text-stroke:0.2px #141414;">05/05/2017</div>
<div class="t" style="font-size:9px;top:338px;color:#1a1a1a;left:595px;transform-origin:0 0;transform:scaleX(0.9750) rotate(0.03deg);-webkit-text-stroke:0.2px #141414;">30/04/2017</div>
<div class="t" style="font-size:9px;top:338px;color:#1a1a1a;left:659.8px;transform-origin:0 0;transform:scaleX(0.9750) rotate(0.03deg);-webkit-text-stroke:0.2px #141414;">01</div>
<div class="t" style="font-size:9px;top:338px;color:#1a1a1a;left:746.6px;transform-origin:0 0;transform:scaleX(0.9750) rotate(0.03deg);-webkit-text-stroke:0.2px #141414;">CC000008</div>
<div class="t" style="font-size:9px;top:338px;color:#1a1a1a;right:224.6px;transform-origin:100% 0;transform:scaleX(0.9750) rotate(0.03deg);-webkit-text-stroke:0.2px #141414;">0</div>
<div class="t" style="font-size:9px;top:338px;color:#1a1a1a;left:917px;transform-origin:0 0;transform:scaleX(0.9750) rotate(0.03deg);-webkit-text-stroke:0.2px #141414;">C</div>
<div class="t" style="font-size:9px;top:338px;color:#1a1a1a;right:35.9px;transform-origin:100% 0;transform:scaleX(0.9750) rotate(0.03deg);-webkit-text-stroke:0.2px #141414;">5.000,00</div>
<div style="left:15.4px;top:355.1px;width:1086.9px;height:14.1px;background:#fafafa;"></div>
<div style="left:15.4px;top:368px;width:1086.9px;height:1.3px;background:#c6c6c6;"></div>
<div class="t" style="font-size:9px;top:352px;color:#1a1a1a;left:16.3px;transform-origin:0 0;transform:scaleX(0.9750) rotate(0.03deg);-webkit-text-stroke:0.2px #141414;">707</div>
<div class="t" style="font-size:9px;top:352px;color:#1a1a1a;left:107.5px;transform-origin:0 0;transform:scaleX(0.9501) rotate(0.03deg);-webkit-text-stroke:0.2px #141414;">BASE DO F.G.T.S.</div>
<div class="t" style="font-size:9px;top:352px;color:#1a1a1a;left:227.2px;transform-origin:0 0;transform:scaleX(0.9750) rotate(0.03deg);-webkit-text-stroke:0.2px #141414;">Valor</div>
<div class="t" style="font-size:9px;top:352px;color:#1a1a1a;right:797.5px;transform-origin:100% 0;transform:scaleX(0.9750) rotate(0.03deg);-webkit-text-stroke:0.2px #141414;">0,00</div>
<div class="t" style="font-size:9px;top:352px;color:#1a1a1a;right:704.1px;transform-origin:100% 0;transform:scaleX(0.9750) rotate(0.03deg);-webkit-text-stroke:0.2px #141414;">5.000,00</div>
<div class="t" style="font-size:9px;top:352px;color:#1a1a1a;right:611.6px;transform-origin:100% 0;transform:scaleX(0.9750) rotate(0.03deg);-webkit-text-stroke:0.2px #141414;">0,00</div>
<div class="t" style="font-size:9px;top:352px;color:#1a1a1a;left:530.2px;transform-origin:0 0;transform:scaleX(0.9750) rotate(0.03deg);-webkit-text-stroke:0.2px #141414;">05/05/2017</div>
<div class="t" style="font-size:9px;top:352px;color:#1a1a1a;left:595px;transform-origin:0 0;transform:scaleX(0.9750) rotate(0.03deg);-webkit-text-stroke:0.2px #141414;">30/04/2017</div>
<div class="t" style="font-size:9px;top:352px;color:#1a1a1a;left:659.8px;transform-origin:0 0;transform:scaleX(0.9750) rotate(0.03deg);-webkit-text-stroke:0.2px #141414;">01</div>
<div class="t" style="font-size:9px;top:352px;color:#1a1a1a;left:746.6px;transform-origin:0 0;transform:scaleX(0.9750) rotate(0.03deg);-webkit-text-stroke:0.2px #141414;">CC000008</div>
<div class="t" style="font-size:9px;top:352px;color:#1a1a1a;right:224.6px;transform-origin:100% 0;transform:scaleX(0.9750) rotate(0.03deg);-webkit-text-stroke:0.2px #141414;">0</div>
<div class="t" style="font-size:9px;top:352px;color:#1a1a1a;left:917px;transform-origin:0 0;transform:scaleX(0.9750) rotate(0.03deg);-webkit-text-stroke:0.2px #141414;">C</div>
<div class="t" style="font-size:9px;top:352px;color:#1a1a1a;right:35.9px;transform-origin:100% 0;transform:scaleX(0.9750) rotate(0.03deg);-webkit-text-stroke:0.2px #141414;">5.000,00</div>
<div style="left:15.4px;top:369.2px;width:1086.9px;height:14.1px;background:#e5e5e5;"></div>
<div style="left:15.4px;top:382.1px;width:1086.9px;height:1.3px;background:#c6c6c6;"></div>
<div class="t" style="font-size:9px;top:366px;color:#1a1a1a;left:16.3px;transform-origin:0 0;transform:scaleX(0.9750) rotate(0.03deg);-webkit-text-stroke:0.2px #141414;">708</div>
<div class="t" style="font-size:9px;top:366px;color:#1a1a1a;left:107.5px;transform-origin:0 0;transform:scaleX(0.9099) rotate(0.03deg);-webkit-text-stroke:0.2px #141414;">FGTS DEPOSITO MES</div>
<div class="t" style="font-size:9px;top:366px;color:#1a1a1a;left:227.2px;transform-origin:0 0;transform:scaleX(0.9750) rotate(0.03deg);-webkit-text-stroke:0.2px #141414;">Valor</div>
<div class="t" style="font-size:9px;top:366px;color:#1a1a1a;right:797.5px;transform-origin:100% 0;transform:scaleX(0.9750) rotate(0.03deg);-webkit-text-stroke:0.2px #141414;">0,00</div>
<div class="t" style="font-size:9px;top:366px;color:#1a1a1a;right:704.1px;transform-origin:100% 0;transform:scaleX(0.9750) rotate(0.03deg);-webkit-text-stroke:0.2px #141414;">399,99</div>
<div class="t" style="font-size:9px;top:366px;color:#1a1a1a;right:611.6px;transform-origin:100% 0;transform:scaleX(0.9750) rotate(0.03deg);-webkit-text-stroke:0.2px #141414;">0,00</div>
<div class="t" style="font-size:9px;top:366px;color:#1a1a1a;left:530.2px;transform-origin:0 0;transform:scaleX(0.9750) rotate(0.03deg);-webkit-text-stroke:0.2px #141414;">05/05/2017</div>
<div class="t" style="font-size:9px;top:366px;color:#1a1a1a;left:595px;transform-origin:0 0;transform:scaleX(0.9750) rotate(0.03deg);-webkit-text-stroke:0.2px #141414;">30/04/2017</div>
<div class="t" style="font-size:9px;top:366px;color:#1a1a1a;left:659.8px;transform-origin:0 0;transform:scaleX(0.9750) rotate(0.03deg);-webkit-text-stroke:0.2px #141414;">01</div>
<div class="t" style="font-size:9px;top:366px;color:#1a1a1a;left:746.6px;transform-origin:0 0;transform:scaleX(0.9750) rotate(0.03deg);-webkit-text-stroke:0.2px #141414;">CC000008</div>
<div class="t" style="font-size:9px;top:366px;color:#1a1a1a;right:224.6px;transform-origin:100% 0;transform:scaleX(0.9750) rotate(0.03deg);-webkit-text-stroke:0.2px #141414;">0</div>
<div class="t" style="font-size:9px;top:366px;color:#1a1a1a;left:917px;transform-origin:0 0;transform:scaleX(0.9750) rotate(0.03deg);-webkit-text-stroke:0.2px #141414;">C</div>
<div class="t" style="font-size:9px;top:366px;color:#1a1a1a;right:35.9px;transform-origin:100% 0;transform:scaleX(0.9750) rotate(0.03deg);-webkit-text-stroke:0.2px #141414;">5.000,00</div>
<div style="left:15.4px;top:383.3px;width:1086.9px;height:14.1px;background:#fafafa;"></div>
<div style="left:15.4px;top:396.2px;width:1086.9px;height:1.3px;background:#c6c6c6;"></div>
<div class="t" style="font-size:9px;top:380px;color:#1a1a1a;left:16.3px;transform-origin:0 0;transform:scaleX(0.9750) rotate(0.03deg);-webkit-text-stroke:0.2px #141414;">713</div>
<div class="t" style="font-size:9px;top:380px;color:#1a1a1a;left:107.5px;transform-origin:0 0;transform:scaleX(0.9036) rotate(0.03deg);-webkit-text-stroke:0.2px #141414;">LIQUIDO A RECEBER</div>
<div class="t" style="font-size:9px;top:380px;color:#1a1a1a;left:227.2px;transform-origin:0 0;transform:scaleX(0.9750) rotate(0.03deg);-webkit-text-stroke:0.2px #141414;">Valor</div>
<div class="t" style="font-size:9px;top:380px;color:#1a1a1a;right:797.5px;transform-origin:100% 0;transform:scaleX(0.9750) rotate(0.03deg);-webkit-text-stroke:0.2px #141414;">0,00</div>
<div class="t" style="font-size:9px;top:380px;color:#1a1a1a;right:704.1px;transform-origin:100% 0;transform:scaleX(0.9750) rotate(0.03deg);-webkit-text-stroke:0.2px #141414;">3.970,00</div>
<div class="t" style="font-size:9px;top:380px;color:#1a1a1a;right:611.6px;transform-origin:100% 0;transform:scaleX(0.9750) rotate(0.03deg);-webkit-text-stroke:0.2px #141414;">0,00</div>
<div class="t" style="font-size:9px;top:380px;color:#1a1a1a;left:530.2px;transform-origin:0 0;transform:scaleX(0.9750) rotate(0.03deg);-webkit-text-stroke:0.2px #141414;">05/05/2017</div>
<div class="t" style="font-size:9px;top:380px;color:#1a1a1a;left:595px;transform-origin:0 0;transform:scaleX(0.9750) rotate(0.03deg);-webkit-text-stroke:0.2px #141414;">30/04/2017</div>
<div class="t" style="font-size:9px;top:380px;color:#1a1a1a;left:659.8px;transform-origin:0 0;transform:scaleX(0.9750) rotate(0.03deg);-webkit-text-stroke:0.2px #141414;">01</div>
<div class="t" style="font-size:9px;top:380px;color:#1a1a1a;left:746.6px;transform-origin:0 0;transform:scaleX(0.9750) rotate(0.03deg);-webkit-text-stroke:0.2px #141414;">CC000008</div>
<div class="t" style="font-size:9px;top:380px;color:#1a1a1a;right:224.6px;transform-origin:100% 0;transform:scaleX(0.9750) rotate(0.03deg);-webkit-text-stroke:0.2px #141414;">0</div>
<div class="t" style="font-size:9px;top:380px;color:#1a1a1a;left:917px;transform-origin:0 0;transform:scaleX(0.9750) rotate(0.03deg);-webkit-text-stroke:0.2px #141414;">C</div>
<div class="t" style="font-size:9px;top:380px;color:#1a1a1a;right:35.9px;transform-origin:100% 0;transform:scaleX(0.9750) rotate(0.03deg);-webkit-text-stroke:0.2px #141414;">5.000,00</div>
<div style="left:15.4px;top:397.4px;width:1086.9px;height:14.1px;background:#e5e5e5;"></div>
<div style="left:15.4px;top:410.3px;width:1086.9px;height:1.3px;background:#c6c6c6;"></div>
<div class="t" style="font-size:9px;top:394px;color:#1a1a1a;left:16.3px;transform-origin:0 0;transform:scaleX(0.9750) rotate(0.03deg);-webkit-text-stroke:0.2px #141414;">748</div>
<div class="t" style="font-size:9px;top:394px;color:#1a1a1a;left:107.5px;transform-origin:0 0;transform:scaleX(0.9165) rotate(0.03deg);-webkit-text-stroke:0.2px #141414;">% TERCEIROS</div>
<div class="t" style="font-size:9px;top:394px;color:#1a1a1a;left:227.2px;transform-origin:0 0;transform:scaleX(0.9750) rotate(0.03deg);-webkit-text-stroke:0.2px #141414;">Valor</div>
<div class="t" style="font-size:9px;top:394px;color:#1a1a1a;right:797.5px;transform-origin:100% 0;transform:scaleX(0.9750) rotate(0.03deg);-webkit-text-stroke:0.2px #141414;">0,00</div>
<div class="t" style="font-size:9px;top:394px;color:#1a1a1a;right:704.1px;transform-origin:100% 0;transform:scaleX(0.9750) rotate(0.03deg);-webkit-text-stroke:0.2px #141414;">280,33</div>
<div class="t" style="font-size:9px;top:394px;color:#1a1a1a;right:611.6px;transform-origin:100% 0;transform:scaleX(0.9750) rotate(0.03deg);-webkit-text-stroke:0.2px #141414;">0,00</div>
<div class="t" style="font-size:9px;top:394px;color:#1a1a1a;left:530.2px;transform-origin:0 0;transform:scaleX(0.9750) rotate(0.03deg);-webkit-text-stroke:0.2px #141414;">05/05/2017</div>
<div class="t" style="font-size:9px;top:394px;color:#1a1a1a;left:595px;transform-origin:0 0;transform:scaleX(0.9750) rotate(0.03deg);-webkit-text-stroke:0.2px #141414;">30/04/2017</div>
<div class="t" style="font-size:9px;top:394px;color:#1a1a1a;left:659.8px;transform-origin:0 0;transform:scaleX(0.9750) rotate(0.03deg);-webkit-text-stroke:0.2px #141414;">01</div>
<div class="t" style="font-size:9px;top:394px;color:#1a1a1a;left:746.6px;transform-origin:0 0;transform:scaleX(0.9750) rotate(0.03deg);-webkit-text-stroke:0.2px #141414;">CC000008</div>
<div class="t" style="font-size:9px;top:394px;color:#1a1a1a;right:224.6px;transform-origin:100% 0;transform:scaleX(0.9750) rotate(0.03deg);-webkit-text-stroke:0.2px #141414;">0</div>
<div class="t" style="font-size:9px;top:394px;color:#1a1a1a;left:917px;transform-origin:0 0;transform:scaleX(0.9750) rotate(0.03deg);-webkit-text-stroke:0.2px #141414;">C</div>
<div class="t" style="font-size:9px;top:394px;color:#1a1a1a;right:35.9px;transform-origin:100% 0;transform:scaleX(0.9750) rotate(0.03deg);-webkit-text-stroke:0.2px #141414;">5.000,00</div>
<div style="left:15.4px;top:411.5px;width:1086.9px;height:14.1px;background:#fafafa;"></div>
<div style="left:15.4px;top:424.4px;width:1086.9px;height:1.3px;background:#c6c6c6;"></div>
<div class="t" style="font-size:9px;top:408px;color:#1a1a1a;left:16.3px;transform-origin:0 0;transform:scaleX(0.9750) rotate(0.03deg);-webkit-text-stroke:0.2px #141414;">749</div>
<div class="t" style="font-size:9px;top:408px;color:#1a1a1a;left:107.5px;transform-origin:0 0;transform:scaleX(0.9675) rotate(0.03deg);-webkit-text-stroke:0.2px #141414;">% ACID. TRABALHO</div>
<div class="t" style="font-size:9px;top:408px;color:#1a1a1a;left:227.2px;transform-origin:0 0;transform:scaleX(0.9750) rotate(0.03deg);-webkit-text-stroke:0.2px #141414;">Valor</div>
<div class="t" style="font-size:9px;top:408px;color:#1a1a1a;right:797.5px;transform-origin:100% 0;transform:scaleX(0.9750) rotate(0.03deg);-webkit-text-stroke:0.2px #141414;">0,00</div>
<div class="t" style="font-size:9px;top:408px;color:#1a1a1a;right:704.1px;transform-origin:100% 0;transform:scaleX(0.9750) rotate(0.03deg);-webkit-text-stroke:0.2px #141414;">111,17</div>
<div class="t" style="font-size:9px;top:408px;color:#1a1a1a;right:611.6px;transform-origin:100% 0;transform:scaleX(0.9750) rotate(0.03deg);-webkit-text-stroke:0.2px #141414;">0,00</div>
<div class="t" style="font-size:9px;top:408px;color:#1a1a1a;left:530.2px;transform-origin:0 0;transform:scaleX(0.9750) rotate(0.03deg);-webkit-text-stroke:0.2px #141414;">05/05/2017</div>
<div class="t" style="font-size:9px;top:408px;color:#1a1a1a;left:595px;transform-origin:0 0;transform:scaleX(0.9750) rotate(0.03deg);-webkit-text-stroke:0.2px #141414;">30/04/2017</div>
<div class="t" style="font-size:9px;top:408px;color:#1a1a1a;left:659.8px;transform-origin:0 0;transform:scaleX(0.9750) rotate(0.03deg);-webkit-text-stroke:0.2px #141414;">01</div>
<div class="t" style="font-size:9px;top:408px;color:#1a1a1a;left:746.6px;transform-origin:0 0;transform:scaleX(0.9750) rotate(0.03deg);-webkit-text-stroke:0.2px #141414;">CC000008</div>
<div class="t" style="font-size:9px;top:408px;color:#1a1a1a;right:224.6px;transform-origin:100% 0;transform:scaleX(0.9750) rotate(0.03deg);-webkit-text-stroke:0.2px #141414;">0</div>
<div class="t" style="font-size:9px;top:408px;color:#1a1a1a;left:917px;transform-origin:0 0;transform:scaleX(0.9750) rotate(0.03deg);-webkit-text-stroke:0.2px #141414;">C</div>
<div class="t" style="font-size:9px;top:408px;color:#1a1a1a;right:35.9px;transform-origin:100% 0;transform:scaleX(0.9750) rotate(0.03deg);-webkit-text-stroke:0.2px #141414;">5.000,00</div>
<div style="left:15.4px;top:425.6px;width:1086.9px;height:14.1px;background:#e5e5e5;"></div>
<div style="left:15.4px;top:438.5px;width:1086.9px;height:1.3px;background:#c6c6c6;"></div>
<div class="t" style="font-size:9px;top:422px;color:#1a1a1a;left:16.3px;transform-origin:0 0;transform:scaleX(0.9750) rotate(0.03deg);-webkit-text-stroke:0.2px #141414;">753</div>
<div class="t" style="font-size:9px;top:422px;color:#1a1a1a;left:107.5px;transform-origin:0 0;transform:scaleX(0.9223) rotate(0.03deg);-webkit-text-stroke:0.2px #141414;">DED. INSS IR FOLHA</div>
<div class="t" style="font-size:9px;top:422px;color:#1a1a1a;left:227.2px;transform-origin:0 0;transform:scaleX(0.9750) rotate(0.03deg);-webkit-text-stroke:0.2px #141414;">Valor</div>
<div class="t" style="font-size:9px;top:422px;color:#1a1a1a;right:797.5px;transform-origin:100% 0;transform:scaleX(0.9750) rotate(0.03deg);-webkit-text-stroke:0.2px #141414;">0,00</div>
<div class="t" style="font-size:9px;top:422px;color:#1a1a1a;right:704.1px;transform-origin:100% 0;transform:scaleX(0.9750) rotate(0.03deg);-webkit-text-stroke:0.2px #141414;">531,66</div>
<div class="t" style="font-size:9px;top:422px;color:#1a1a1a;right:611.6px;transform-origin:100% 0;transform:scaleX(0.9750) rotate(0.03deg);-webkit-text-stroke:0.2px #141414;">0,00</div>
<div class="t" style="font-size:9px;top:422px;color:#1a1a1a;left:530.2px;transform-origin:0 0;transform:scaleX(0.9750) rotate(0.03deg);-webkit-text-stroke:0.2px #141414;">05/05/2017</div>
<div class="t" style="font-size:9px;top:422px;color:#1a1a1a;left:595px;transform-origin:0 0;transform:scaleX(0.9750) rotate(0.03deg);-webkit-text-stroke:0.2px #141414;">30/04/2017</div>
<div class="t" style="font-size:9px;top:422px;color:#1a1a1a;left:659.8px;transform-origin:0 0;transform:scaleX(0.9750) rotate(0.03deg);-webkit-text-stroke:0.2px #141414;">01</div>
<div class="t" style="font-size:9px;top:422px;color:#1a1a1a;left:746.6px;transform-origin:0 0;transform:scaleX(0.9750) rotate(0.03deg);-webkit-text-stroke:0.2px #141414;">CC000008</div>
<div class="t" style="font-size:9px;top:422px;color:#1a1a1a;right:224.6px;transform-origin:100% 0;transform:scaleX(0.9750) rotate(0.03deg);-webkit-text-stroke:0.2px #141414;">0</div>
<div class="t" style="font-size:9px;top:422px;color:#1a1a1a;left:917px;transform-origin:0 0;transform:scaleX(0.9750) rotate(0.03deg);-webkit-text-stroke:0.2px #141414;">C</div>
<div class="t" style="font-size:9px;top:422px;color:#1a1a1a;right:35.9px;transform-origin:100% 0;transform:scaleX(0.9750) rotate(0.03deg);-webkit-text-stroke:0.2px #141414;">5.000,00</div>
<div style="left:15.4px;top:439.7px;width:1086.9px;height:14.1px;background:#fafafa;"></div>
<div style="left:15.4px;top:452.6px;width:1086.9px;height:1.3px;background:#c6c6c6;"></div>
<div class="t" style="font-size:9px;top:436px;color:#1a1a1a;left:16.3px;transform-origin:0 0;transform:scaleX(0.9750) rotate(0.03deg);-webkit-text-stroke:0.2px #141414;">787</div>
<div class="t" style="font-size:9px;top:436px;color:#1a1a1a;left:107.5px;transform-origin:0 0;transform:scaleX(0.9185) rotate(0.03deg);-webkit-text-stroke:0.2px #141414;">BASE PIS EMPRESA</div>
<div class="t" style="font-size:9px;top:436px;color:#1a1a1a;left:227.2px;transform-origin:0 0;transform:scaleX(0.9750) rotate(0.03deg);-webkit-text-stroke:0.2px #141414;">Valor</div>
<div class="t" style="font-size:9px;top:436px;color:#1a1a1a;right:797.5px;transform-origin:100% 0;transform:scaleX(0.9750) rotate(0.03deg);-webkit-text-stroke:0.2px #141414;">0,00</div>
<div class="t" style="font-size:9px;top:436px;color:#1a1a1a;right:704.1px;transform-origin:100% 0;transform:scaleX(0.9750) rotate(0.03deg);-webkit-text-stroke:0.2px #141414;">4.833,33</div>
<div class="t" style="font-size:9px;top:436px;color:#1a1a1a;right:611.6px;transform-origin:100% 0;transform:scaleX(0.9750) rotate(0.03deg);-webkit-text-stroke:0.2px #141414;">0,00</div>
<div class="t" style="font-size:9px;top:436px;color:#1a1a1a;left:530.2px;transform-origin:0 0;transform:scaleX(0.9750) rotate(0.03deg);-webkit-text-stroke:0.2px #141414;">05/05/2017</div>
<div class="t" style="font-size:9px;top:436px;color:#1a1a1a;left:595px;transform-origin:0 0;transform:scaleX(0.9750) rotate(0.03deg);-webkit-text-stroke:0.2px #141414;">30/04/2017</div>
<div class="t" style="font-size:9px;top:436px;color:#1a1a1a;left:659.8px;transform-origin:0 0;transform:scaleX(0.9750) rotate(0.03deg);-webkit-text-stroke:0.2px #141414;">01</div>
<div class="t" style="font-size:9px;top:436px;color:#1a1a1a;left:746.6px;transform-origin:0 0;transform:scaleX(0.9750) rotate(0.03deg);-webkit-text-stroke:0.2px #141414;">CC000008</div>
<div class="t" style="font-size:9px;top:436px;color:#1a1a1a;right:224.6px;transform-origin:100% 0;transform:scaleX(0.9750) rotate(0.03deg);-webkit-text-stroke:0.2px #141414;">0</div>
<div class="t" style="font-size:9px;top:436px;color:#1a1a1a;left:917px;transform-origin:0 0;transform:scaleX(0.9750) rotate(0.03deg);-webkit-text-stroke:0.2px #141414;">C</div>
<div class="t" style="font-size:9px;top:436px;color:#1a1a1a;right:35.9px;transform-origin:100% 0;transform:scaleX(0.9750) rotate(0.03deg);-webkit-text-stroke:0.2px #141414;">5.000,00</div>
<div style="left:15.4px;top:453.8px;width:1086.9px;height:14.1px;background:#e5e5e5;"></div>
<div style="left:15.4px;top:466.7px;width:1086.9px;height:1.3px;background:#c6c6c6;"></div>
<div class="t" style="font-size:9px;top:450px;color:#1a1a1a;left:16.3px;transform-origin:0 0;transform:scaleX(0.9750) rotate(0.03deg);-webkit-text-stroke:0.2px #141414;">789</div>
<div class="t" style="font-size:9px;top:450px;color:#1a1a1a;left:107.5px;transform-origin:0 0;transform:scaleX(0.8981) rotate(0.03deg);-webkit-text-stroke:0.2px #141414;">PIS EMPRESA</div>
<div class="t" style="font-size:9px;top:450px;color:#1a1a1a;left:227.2px;transform-origin:0 0;transform:scaleX(0.9750) rotate(0.03deg);-webkit-text-stroke:0.2px #141414;">Valor</div>
<div class="t" style="font-size:9px;top:450px;color:#1a1a1a;right:797.5px;transform-origin:100% 0;transform:scaleX(0.9750) rotate(0.03deg);-webkit-text-stroke:0.2px #141414;">0,00</div>
<div class="t" style="font-size:9px;top:450px;color:#1a1a1a;right:704.1px;transform-origin:100% 0;transform:scaleX(0.9750) rotate(0.03deg);-webkit-text-stroke:0.2px #141414;">48,33</div>
<div class="t" style="font-size:9px;top:450px;color:#1a1a1a;right:611.6px;transform-origin:100% 0;transform:scaleX(0.9750) rotate(0.03deg);-webkit-text-stroke:0.2px #141414;">0,00</div>
<div class="t" style="font-size:9px;top:450px;color:#1a1a1a;left:530.2px;transform-origin:0 0;transform:scaleX(0.9750) rotate(0.03deg);-webkit-text-stroke:0.2px #141414;">05/05/2017</div>
<div class="t" style="font-size:9px;top:450px;color:#1a1a1a;left:595px;transform-origin:0 0;transform:scaleX(0.9750) rotate(0.03deg);-webkit-text-stroke:0.2px #141414;">30/04/2017</div>
<div class="t" style="font-size:9px;top:450px;color:#1a1a1a;left:659.8px;transform-origin:0 0;transform:scaleX(0.9750) rotate(0.03deg);-webkit-text-stroke:0.2px #141414;">01</div>
<div class="t" style="font-size:9px;top:450px;color:#1a1a1a;left:746.6px;transform-origin:0 0;transform:scaleX(0.9750) rotate(0.03deg);-webkit-text-stroke:0.2px #141414;">CC000008</div>
<div class="t" style="font-size:9px;top:450px;color:#1a1a1a;right:224.6px;transform-origin:100% 0;transform:scaleX(0.9750) rotate(0.03deg);-webkit-text-stroke:0.2px #141414;">0</div>
<div class="t" style="font-size:9px;top:450px;color:#1a1a1a;left:917px;transform-origin:0 0;transform:scaleX(0.9750) rotate(0.03deg);-webkit-text-stroke:0.2px #141414;">C</div>
<div class="t" style="font-size:9px;top:450px;color:#1a1a1a;right:35.9px;transform-origin:100% 0;transform:scaleX(0.9750) rotate(0.03deg);-webkit-text-stroke:0.2px #141414;">5.000,00</div>
<div style="left:105.45px;top:241.7px;width:1.1px;height:226.2px;background:#b8b8b8;"></div>
<div style="left:225.25px;top:241.7px;width:1.1px;height:226.2px;background:#b8b8b8;"></div>
<div style="left:268.25px;top:241.7px;width:1.1px;height:226.2px;background:#b8b8b8;"></div>
<div style="left:343.35px;top:241.7px;width:1.1px;height:226.2px;background:#b8b8b8;"></div>
<div style="left:435.75px;top:241.7px;width:1.1px;height:226.2px;background:#b8b8b8;"></div>
<div style="left:528.25px;top:241.7px;width:1.1px;height:226.2px;background:#b8b8b8;"></div>
<div style="left:593.05px;top:241.7px;width:1.1px;height:226.2px;background:#b8b8b8;"></div>
<div style="left:657.85px;top:241.7px;width:1.1px;height:226.2px;background:#b8b8b8;"></div>
<div style="left:742.25px;top:241.7px;width:1.1px;height:226.2px;background:#b8b8b8;"></div>
<div style="left:833.35px;top:241.7px;width:1.1px;height:226.2px;background:#b8b8b8;"></div>
<div style="left:915.05px;top:241.7px;width:1.1px;height:226.2px;background:#b8b8b8;"></div>
<div style="left:951.35px;top:241.7px;width:1.1px;height:226.2px;background:#b8b8b8;"></div>
<div style="left:1011.25px;top:241.7px;width:1.1px;height:226.2px;background:#b8b8b8;"></div>
<div style="left:343.6px;top:283.7px;width:91.9px;height:14.2px;border:1.15px solid #262626;"></div>
<div style="left:1102.6px;top:218.4px;width:12.6px;height:12.6px;background:linear-gradient(#ffffff,#e4e4e4);border:1px solid #c6c6c6;border-radius:2.5px;"></div>
<svg style="position:absolute;left:1102.6px;top:218.4px" width="12.6" height="12.6" viewBox="0 0 12.6 12.6"><path d="M3.5 3.7h6v1.3H3.5z M6.5 5.6 L9.6 9.0 H3.4 Z" fill="#0c0c0c"/></svg>
<div style="left:1102.6px;top:231.5px;width:12.6px;height:12.4px;background:linear-gradient(#ffffff,#e4e4e4);border:1px solid #c6c6c6;border-radius:2.5px;"></div>
<svg style="position:absolute;left:1102.6px;top:231.5px" width="12.6" height="12.4" viewBox="0 0 12.6 12.4"><path d="M6.5 2.6 L9.5 5.5 H3.5 Z M6.5 5.6 L9.5 9.1 H3.5 Z" fill="#0c0c0c"/></svg>
<div style="left:1102.6px;top:245px;width:12.6px;height:12px;background:linear-gradient(#ffffff,#e4e4e4);border:1px solid #c6c6c6;border-radius:2.5px;"></div>
<svg style="position:absolute;left:1102.6px;top:245px" width="12.6" height="12.0" viewBox="0 0 12.6 12.0"><path d="M6.5 3.9 L10.1 8.0 H2.9 Z" fill="#0c0c0c"/></svg>
<div style="left:1102.6px;top:466.5px;width:12.6px;height:12.4px;background:linear-gradient(#ffffff,#e4e4e4);border:1px solid #c6c6c6;border-radius:2.5px;"></div>
<svg style="position:absolute;left:1102.6px;top:466.5px" width="12.6" height="12.4" viewBox="0 0 12.6 12.4"><path d="M2.9 4.4 H10.1 L6.5 8.4 Z" fill="#0c0c0c"/></svg>
<div style="left:1102.6px;top:479.8px;width:12.6px;height:5px;background:#f2f2f2;border:1px solid #d4d4d4;border-radius:2.5px 2.5px 0 0;"></div>
<div style="left:0px;top:482px;width:1138px;height:6px;background:#fff;"></div>
<div style="left:1130px;top:0px;width:8px;height:488px;background:#fff;"></div>
<svg style="position:absolute;left:557px;top:228.1px" width="14" height="19" viewBox="0 0 14 19"><path d="M1.2 1 L1.2 13.8 L4.2 11.1 L6.5 16.4 L8.7 15.4 L6.4 10.3 L10.5 10.3 Z" fill="#fff" stroke="#2a2a2a" stroke-width="1.05" stroke-linejoin="round"/></svg>
</div></body></html>
